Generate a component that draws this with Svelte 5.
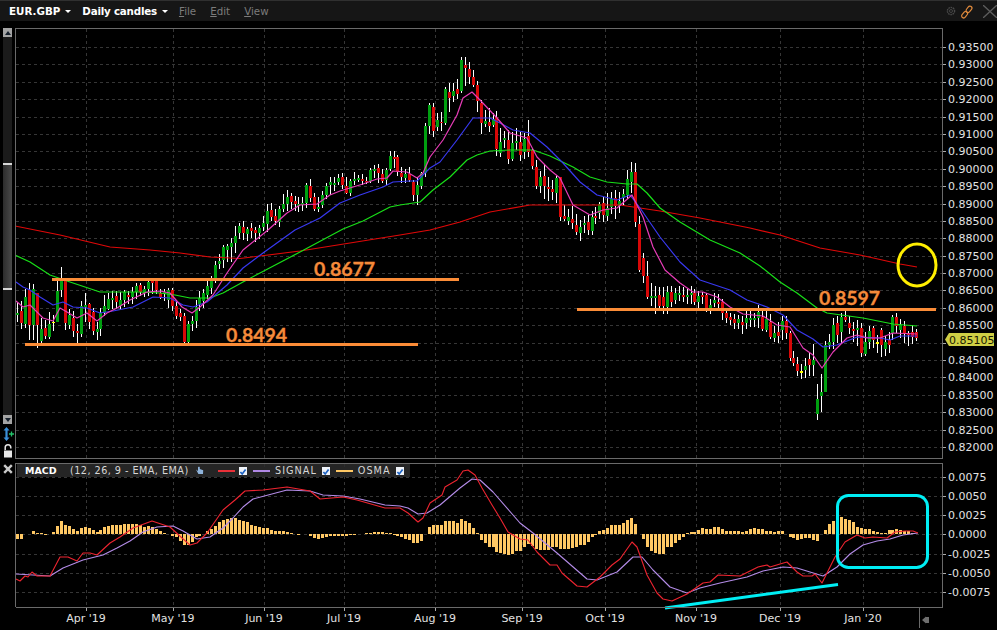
<script>
  // candle rows: colour, body top, body bottom, wick top, wick bottom (pixel y)
  const raw = `g 313 315 300 324,r 311 323 299 330,g 297 324 287 329,r 290 325 281 343,g 289 325 283 343,r 293 325 293 353,g 329 341 316 344,r 328 336 318 340,
g 324 337 309 340,y 322 323 313 333,g 291 322 277 322,g 281 290 264 298,r 281 323 280 332,g 315 325 308 330,r 318 331 310 338,r 331 333 323 349,
g 306 334 300 338,g 305 307 290 325,r 304 322 303 330,r 312 331 307 336,g 329 332 320 342,g 313 329 307 337,g 306 313 293 317,g 299 309 292 310,
g 298 300 289 311,r 296 302 290 310,g 300 306 290 310,g 292 300 289 308,r 295 297 290 305,g 292 297 286 305,g 286 292 282 300,r 285 292 283 297,
g 289 293 285 298,g 282 289 280 297,r 281 283 281 296,r 280 290 279 295,r 293 297 288 300,g 292 294 288 302,g 290 300 288 310,r 290 306 288 312,
r 306 316 300 320,r 313 317 308 322,r 316 342 312 346,g 324 342 320 347,g 321 324 315 332,g 307 321 298 330,g 298 304 290 312,g 293 301 288 310,
g 286 295 276 300,g 281 288 275 295,g 265 278 260 284,g 261 264 252 270,g 247 260 244 270,g 246 250 243 265,g 243 247 237 265,g 236 243 224 255,
g 226 233 222 240,r 227 233 220 242,g 229 234 226 242,r 228 231 222 240,r 230 233 226 244,g 228 233 224 240,g 223 227 215 232,g 211 224 202 234,
r 210 217 202 222,r 216 221 207 226,g 209 222 205 228,g 204 209 192 213,g 197 204 188 212,r 196 202 192 210,r 201 204 195 213,g 204 206 195 213,
g 203 205 196 212,g 185 203 183 209,r 186 198 177 203,r 197 209 192 212,g 207 209 195 213,g 195 205 190 209,g 186 195 182 200,g 182 185 176 197,
g 183 185 176 192,g 178 182 173 186,r 177 185 172 190,r 186 193 175 194,g 181 193 178 197,g 179 181 171 186,g 178 180 174 183,r 179 181 173 186,
r 181 182 176 184,g 170 181 168 184,g 169 171 164 180,r 168 173 163 185,r 174 181 168 184,g 170 180 168 186,g 156 169 150 171,r 157 159 150 170,
r 157 172 154 177,r 173 177 166 184,g 174 178 168 184,r 174 180 166 183,r 182 195 180 202,g 185 195 175 207,g 173 186 172 190,g 126 173 122 178,
g 105 126 102 136,r 107 131 102 138,g 120 127 112 132,r 122 123 110 133,g 89 123 87 125,r 92 98 81 115,g 91 96 81 103,r 89 94 77 100,
g 60 91 56 94,r 65 68 55 90,r 69 77 60 85,r 77 85 68 88,r 85 101 80 115,r 103 123 99 137,g 121 124 108 128,r 122 126 105 133,
g 119 125 112 128,r 117 149 110 158,g 142 153 125 158,g 138 140 130 150,r 140 159 128 165,g 143 159 130 162,g 141 143 125 152,r 142 155 130 162,
g 139 152 132 160,r 136 152 116 158,r 150 166 148 170,r 167 186 158 190,g 177 186 170 194,r 176 186 163 202,r 187 189 175 204,r 189 192 178 202,
g 178 193 176 205,r 177 217 177 222,r 216 219 202 222,g 217 221 207 226,r 219 223 203 230,r 225 232 212 236,g 227 233 218 243,g 223 225 214 235,
r 222 230 213 236,g 217 231 210 236,r 216 218 205 225,g 204 213 201 220,r 203 215 196 224,g 208 216 190 222,g 199 207 190 215,r 198 206 188 222,
g 201 206 190 215,g 194 198 188 207,g 179 195 168 200,g 172 182 160 195,r 172 222 161 228,r 224 270 214 272,r 258 276 252 285,r 276 297 258 300,
g 296 298 280 308,g 296 298 284 317,r 295 306 285 310,r 297 306 285 316,g 292 307 285 316,r 292 302 285 308,g 293 300 287 305,g 293 295 285 302,
r 295 297 285 303,g 295 297 288 306,g 293 295 285 306,r 293 302 288 306,g 296 302 290 310,r 295 297 291 305,r 295 308 292 313,g 305 308 298 315,
g 300 303 291 308,r 302 304 292 312,r 302 313 298 322,r 313 318 308 324,r 317 320 312 326,r 319 323 313 330,g 319 323 314 330,r 322 325 315 336,
g 318 323 310 330,g 318 320 310 328,g 318 320 312 328,g 312 318 303 330,r 317 329 310 332,g 319 330 308 333,r 322 337 312 340,g 333 338 325 343,
r 332 336 320 345,g 321 330 315 342,r 321 333 315 340,r 333 358 330 362,r 358 363 350 367,r 364 371 355 377,y 371 373 362 380,g 366 370 356 380,
r 359 365 350 378,g 360 365 340 378,g 399 414 381 421,g 392 396 370 415,g 345 392 340 392,g 342 345 332 350,g 325 342 317 350,r 323 335 315 345,
g 317 332 312 345,r 317 320 308 322,r 323 328 315 335,r 329 331 320 345,g 328 330 318 350,r 328 353 322 358,g 342 354 330 357,g 331 342 325 350,
r 328 340 325 350,y 342 344 333 355,r 330 345 328 360,g 342 349 335 358,r 340 345 330 355,g 317 333 315 342,r 317 326 312 335,g 325 330 318 340,
r 326 333 320 345,r 333 335 330 348,r 332 337 323 345,r 332 338 328 342`;

  const barX = (i) => Math.round(17.3 + 3.96 * i);

  const candles = raw.split(",").map((row, i) => {
    const [color, top, bottom, high, low] = row.trim().split(" ").map((v, n) => (n ? +v : v));
    // wicks were read off a bit long, pull them in towards the body
    return {
      x: barX(i),
      color,
      top,
      bottom,
      high: Math.round(top - (top - high) * 0.82),
      low: Math.round(bottom + (low - bottom) * 0.82)
    };
  });

  // histogram heights, in thirds of a pixel above the zero line
  const osma = [
    -14, -14, 0, 1, 10, 2, 2, -3, 0, 7, 25, 40, 28, 25, 15, 9, 18, 21, 18, 12, 7, 13, 20, 25, 28, 28, 28, 31, 30, 29,
    29, 26, 22, 25, 22, 15, 8, 3, 1, -5, -10, -20, -32, -32, -25, -10, -6, 0, 8, 15, 25, 35, 42, 45, 48, 48, 42, 40, 35, 28,
    25, 20, 19, 17, 12, 9, 9, 9, 6, 4, 0, -4, 0, 1, -6, -12, -16, -12, -8, -6, -5, -7, -5, -5, -4, -3, -1, 1, 3, 4,
    5, 7, 6, 4, 3, -2, -6, -10, -14, -18, -26, -26, -20, -1, 22, 26, 28, 28, 40, 40, 40, 33, 44, 40, 32, 18, 4, -18, -28, -38,
    -40, -55, -58, -60, -62, -60, -52, -52, -38, -30, -35, -45, -48, -48, -48, -40, -40, -45, -44, -44, -42, -38, -34, -33, -24, -10, -2, 8, 12, 18,
    27, 26, 28, 32, 42, 48, 30, 0, -15, -38, -50, -58, -60, -60, -40, -38, -28, -18, -8, 2, 6, 5, 12, 17, 14, 14, 20, 20, 16, 10,
    8, 8, 8, 6, 10, 14, 17, 14, 14, 8, 8, 6, 10, 8, 0, -8, -12, -18, -16, -13, -12, -18, -22, 0, 12, 30, 40, 46, 52, 45,
    42, 36, 22, 18, 16, 15, 8, 5, 2, 3, 12, 13, 15, 12, 9, 8, 2, 1
  ];
  const zeroY = 534;

  const ema200 = "15,226 60,235 110,247 150,250 180,253 210,257 240,258.5 260,256 300,251 350,243 400,235 430,230 460,222 490,212 530,205 560,205 620,205 660,211 700,218 750,228 780,235 820,248 860,255 900,264 917,267";
  const ema50 = "15,255 30,262 50,275 70,282 100,292 140,292 160,293 175,295 190,298 210,298 223,293 243,282 260,273 300,252 343,229 363,221 390,207 400,205 420,202 433,190 450,177 467,160 477,155 490,151 510,150 533,150 550,156 573,167 590,177 607,182 627,184 637,184 647,193 660,208 680,222 710,240 740,253 760,266 780,282 797,293 817,308 827,313 863,318 893,324 917,326";
  const ema20 = "16,282 23,287 30,290 40,297 53,305 63,302 73,307 87,308 100,313 113,311 133,307 153,297 170,298 183,305 193,307 207,302 227,285 243,268 263,253 295,230 320,218 340,203 360,195 383,187 393,182 410,181 417,181 430,168 440,162 457,140 473,118 490,118 500,123 513,130 530,133 547,147 563,163 580,182 597,195 617,200 630,195 640,208 660,237 680,262 700,280 730,290 747,300 767,307 783,315 797,330 813,339 823,347 837,345 857,337 880,338 890,340 900,336 917,336";
  const ema9 = "16,301 23,307 30,305 37,312 43,318 53,321 60,308 67,312 77,318 87,313 97,321 107,313 117,308 130,300 147,292 160,291 170,293 182,307 192,313 200,307 213,295 227,273 243,250 268,230 287,213 300,205 317,204 330,195 340,191 363,184 377,179 387,178 393,171 407,172 417,178 423,173 430,157 443,140 457,115 463,98 472,92 480,100 497,118 510,133 527,138 537,157 550,170 560,178 573,205 590,215 603,210 617,208 632,195 643,217 653,247 665,270 680,283 693,292 703,292 717,297 730,307 743,314 763,316 777,325 790,327 803,348 813,355 822,368 833,352 847,338 857,335 867,338 880,338 893,333 917,334";

  const macdLine = "16,579 20,581 25,576 28,577 32,572 37,576 50,576 60,557 68,557 77,561 83,553 90,553 97,555 110,543 120,537 133,528 152,521 170,527 182,538 190,545 197,543 207,533 223,510 235,500 245,491 263,490 287,487 310,491 320,499 343,497 357,500 385,508 400,508 408,513 418,522 423,518 430,503 442,495 445,487 457,480 463,471 468,470 475,475 482,488 492,505 500,518 508,532 520,539 528,540 537,552 550,565 557,565 562,573 577,586 587,587 600,577 612,565 620,559 632,542 637,547 647,575 657,593 663,599 672,601 687,594 703,583 710,582 718,575 740,576 758,567 767,565 770,567 780,564 787,562 797,572 803,576 812,576 815,574 822,583 835,557 845,542 857,535 865,538 873,537 887,538 895,532 905,531 913,531 918,533";
  const signalLine = "16,574 33,575 50,576 63,568 73,564 83,560 103,555 117,548 130,541 143,532 157,527 173,526 183,531 197,539 210,537 223,528 233,518 243,507 253,499 287,490 310,491 323,495 343,496 360,499 385,505 400,506 408,508 418,514 427,513 440,505 460,488 472,479 480,480 493,492 520,523 533,533 557,553 587,579 597,580 617,572 633,557 642,557 653,570 670,587 687,593 700,588 720,583 747,577 763,571 783,567 797,568 810,572 823,576 837,567 850,554 863,545 877,541 890,539 903,535 918,533";

  const months = [
    { x: 86, label: "Apr '19" },
    { x: 173, label: "May '19" },
    { x: 264, label: "Jun '19" },
    { x: 344, label: "Jul '19" },
    { x: 435, label: "Aug '19" },
    { x: 522, label: "Sep '19" },
    { x: 605, label: "Oct '19" },
    { x: 696, label: "Nov '19" },
    { x: 780, label: "Dec '19" },
    { x: 863, label: "Jan '20" }
  ];

  const prices = [];
  for (let n = 0; n < 24; n++) {
    const value = 0.935 - n * 0.005;
    prices.push({ y: Math.round(47 + n * 17.39), label: value.toFixed(5) });
  }

  const macdTicks = [
    { y: 477, label: "0.0075" },
    { y: 496, label: "0.0050" },
    { y: 515, label: "0.0025" },
    { y: 534, label: "0.0000" },
    { y: 554, label: "-0.0025" },
    { y: 573, label: "-0.0050" },
    { y: 592, label: "-0.0075" }
  ];
</script>

<div class="window">
  <header class="bar">
    <span class="title">EUR.GBP</span><i class="caret"></i>
    <span class="title daily">Daily candles</span><i class="caret"></i>
    <nav class="menu">
      <span><u>F</u>ile</span>
      <span><u>E</u>dit</span>
      <span><u>V</u>iew</span>
    </nav>
    <div class="tools">
      <svg width="10" height="10" viewBox="0 0 10 10">
        <circle cx="5" cy="5" r="3.6" fill="none" stroke="#4a4a4a" stroke-width="1.4" stroke-dasharray="1.6 .7" />
        <circle cx="5" cy="5" r="1.5" fill="none" stroke="#444" />
      </svg>
      <svg class="link" width="14" height="14" viewBox="0 0 14 14" fill="none" stroke="#e08a3c" stroke-width="1.2">
        <rect x="7" y="0.8" width="4" height="7" rx="2" transform="rotate(38 9 4.3)" />
        <rect x="2.6" y="6.2" width="4" height="7" rx="2" transform="rotate(38 4.6 9.7)" />
      </svg>
      <svg class="close" width="14" height="13" viewBox="0 0 14 13" stroke="#5c5c5c" stroke-width="1.3">
        <path d="M0 0 14 13M14 0 0 13" />
      </svg>
    </div>
  </header>

  <div class="body">
    <aside class="rail">
      <button class="step" aria-label="up"><i class="up"></i></button>
      <div class="track"></div>
      <div class="thumb"></div>
      <div class="track lower"></div>
      <button class="step" aria-label="down"><i class="down"></i></button>
      <svg class="resize" width="13" height="15" viewBox="0 0 13 15">
        <path d="M4.5 0 7.5 3.5H5.6V10.5H7.5L4.5 14 1.5 10.5H3.4V3.5H1.5Z" fill="#3a8fd8" />
        <path d="M9.5 4.5V9.5M7 7H12" stroke="#22c46a" stroke-width="1.3" />
      </svg>
      <svg class="lock" width="10" height="14" viewBox="0 0 10 14">
        <path d="M2.2 6V3.6A2.8 2.8 0 0 1 7.8 3.6V4.6" fill="none" stroke="#e6e6e6" stroke-width="1.5" />
        <rect x="1" y="6.5" width="8" height="7" fill="#e6e6e6" />
      </svg>
      <svg class="remove" width="10" height="10" viewBox="0 0 10 10">
        <path d="M1.2 1.2 8.8 8.8M8.8 1.2 1.2 8.8" stroke="#c8c8c8" stroke-width="2.4" />
      </svg>
    </aside>

    <div class="panes">
      <svg class="pane" width="982" height="431" viewBox="15 28 982 431">
        <g class="grid">
          {#each months as m}
            <line x1={m.x} x2={m.x} y1="29" y2="458" />
          {/each}
          {#each prices as p}
            <line x1="16" x2="942" y1={p.y} y2={p.y} />
          {/each}
        </g>

        <g class="candles">
          {#each candles as c}
            <rect class="wick" x={c.x} y={c.high} width="1" height={c.low - c.high} />
            <rect class={c.color} x={c.x - 1} y={c.top} width="3" height={c.bottom - c.top} />
          {/each}
        </g>

        <g class="lines">
          <polyline points={ema200} stroke="#e00808" />
          <polyline points={ema50} stroke="#18e018" />
          <polyline points={ema20} stroke="#3838f0" />
          <polyline points={ema9} stroke="#e83cb8" />
        </g>

        <g class="levels">
          <rect x="52" y="278" width="407" height="3" />
          <rect x="25" y="343" width="393" height="3" />
          <rect x="577" y="308" width="359" height="3" />
        </g>
        <text class="level" x="314" y="276">0.8677</text>
        <text class="level" x="226" y="342">0.8494</text>
        <text class="level" x="819" y="305">0.8597</text>
        <ellipse cx="917" cy="265" rx="19" ry="21" fill="none" stroke="#ffee00" stroke-width="3" />

        <path class="frame" d="M15.5 459V28.5H942.5V459M15.5 458.5H942.5" />
        {#each prices as p}
          <line class="tick" x1="943" x2="946" y1={p.y} y2={p.y} />
          {#if p.label !== "0.85000"}
            <text class="axis" x="948" y={p.y + 4}>{p.label}</text>
          {/if}
        {/each}
        <path d="M945 339.5 949 333H994V346H949Z" fill="#cfcf45" />
        <text class="axis tag" x="949" y="344">0.85105</text>
      </svg>

      <div class="macd">
        <div class="legend">
          <b>MACD</b>
          <span class="params">(12, 26, 9 - EMA, EMA)</span>
          <svg class="hand" width="9" height="9" viewBox="0 0 9 9">
            <path d="M1 3.4 3 5V1.2L4 .6 4.8 1.2V3L8.2 4.2 8 8H3.4Z" fill="#8fb4dc" />
          </svg>
          <i class="swatch macd-line"></i>
          <i class="box"><svg width="8" height="8" viewBox="0 0 8 8"><path d="M1.4 4 3.2 6 6.6 1.6" fill="none" stroke="#1d63c4" stroke-width="1.7" /></svg></i>
          <i class="swatch signal-line"></i>
          <span>SIGNAL</span>
          <i class="box"><svg width="8" height="8" viewBox="0 0 8 8"><path d="M1.4 4 3.2 6 6.6 1.6" fill="none" stroke="#1d63c4" stroke-width="1.7" /></svg></i>
          <i class="swatch osma-line"></i>
          <span>OSMA</span>
          <i class="box"><svg width="8" height="8" viewBox="0 0 8 8"><path d="M1.4 4 3.2 6 6.6 1.6" fill="none" stroke="#1d63c4" stroke-width="1.7" /></svg></i>
        </div>

        <svg class="pane" width="982" height="167" viewBox="15 463 982 167">
          <g class="grid">
            {#each months as m}
              <line x1={m.x} x2={m.x} y1="464" y2="607" />
            {/each}
            {#each macdTicks as t}
              <line x1="16" x2="942" y1={t.y} y2={t.y} />
            {/each}
          </g>

          <g class="bars">
            {#each osma as h, i}
              {#if h !== 0}
                <rect x={barX(i) - 1} y={h > 0 ? zeroY - h / 3 : zeroY} width="3" height={Math.abs(h) / 3} />
              {/if}
            {/each}
          </g>

          <g class="lines thin">
            <polyline points={signalLine} stroke="#b48ce8" />
            <polyline points={macdLine} stroke="#ee2430" />
          </g>

          <rect x="837.5" y="495.5" width="90" height="72" rx="11" fill="none" stroke="#00eef4" stroke-width="3" />
          <line x1="665" y1="608" x2="838" y2="584.5" stroke="#00eef4" stroke-width="3" />

          <path class="frame" d="M15.5 607V463.5H942.5V607.5H15.5" />
          {#each macdTicks as t}
            <line class="tick" x1="943" x2="946" y1={t.y} y2={t.y} />
            <text class="axis" x="948" y={t.y + 4}>{t.label}</text>
          {/each}
          {#each months as m}
            <line class="tick" x1={m.x} x2={m.x} y1="608" y2="611" />
            <text class="axis month" x={m.x} y="622">{m.label}</text>
          {/each}

          <line class="frame" x1="919.5" x2="919.5" y1="608" y2="628" />
          <path d="M922 620 926 616.5V623.5Z M926 617H929V623H926Z" fill="#6e6e6e" />
        </svg>
      </div>
    </div>
  </div>
</div>

<style>
  :global(body) {
    background: #000;
  }

  .window {
    width: 997px;
    height: 630px;
    background: #000;
    overflow: hidden;
    font-family: "DejaVu Sans", sans-serif;
  }

  .bar {
    display: flex;
    align-items: center;
    height: 20px;
    margin-bottom: 7px;
    padding-left: 9px;
    background: #161616;
    border-top: 1px solid #303030;
    font-size: 10.3px;
    color: #fff;
  }

  .title {
    font-weight: 700;
  }

  .daily {
    margin-left: 11px;
    letter-spacing: -0.2px;
  }

  .caret {
    width: 0;
    height: 0;
    margin: 1px 0 0 5px;
    border: 3px solid transparent;
    border-top-color: #fff;
    border-bottom: 0;
  }

  .menu {
    display: flex;
    gap: 14px;
    margin-left: 11px;
    color: #7c7c7c;
  }

  .tools {
    display: flex;
    align-items: center;
    margin-left: auto;
  }

  .link {
    margin: 1px 0 0 4px;
  }

  .close {
    margin-left: 9px;
  }

  .body {
    display: flex;
  }

  .rail {
    display: flex;
    flex-direction: column;
    align-items: flex-start;
    width: 15px;
    padding-left: 3px;
    box-sizing: border-box;
  }

  .step {
    display: flex;
    align-items: center;
    justify-content: center;
    width: 9px;
    height: 9px;
    padding: 0;
    border: 0;
    background: #a4a4a4;
  }

  .up,
  .down {
    width: 0;
    height: 0;
    border: 3px solid transparent;
  }

  .up {
    border-top: 0;
    border-bottom: 4px solid #16202c;
  }

  .down {
    border-bottom: 0;
    border-top: 4px solid #16202c;
  }

  .track {
    width: 9px;
    height: 126px;
    background: #1b1b1b;
  }

  .lower {
    height: 125px;
  }

  .thumb {
    width: 9px;
    height: 123px;
    background: linear-gradient(to right, #2c2c2c, #4a4a4a);
    border-top: 2px solid #d8d8d8;
    border-bottom: 2px solid #d8d8d8;
  }

  .resize {
    margin: 3px 0 0 -1px;
  }

  .lock {
    margin: 2px 0 0 0;
  }

  .remove {
    margin: 6px 0 0 0;
  }

  .panes {
    display: flex;
    flex-direction: column;
    gap: 4px;
  }

  .pane {
    display: block;
  }

  .macd {
    position: relative;
  }

  .legend {
    position: absolute;
    top: 1px;
    left: 2px;
    display: flex;
    align-items: center;
    box-sizing: border-box;
    width: 393px;
    height: 13px;
    padding-left: 8px;
    background: rgba(44, 44, 44, 0.85);
    font-size: 9.7px;
    letter-spacing: 1px;
    color: #d8d8d8;
    white-space: nowrap;
  }

  .legend b {
    width: 45px;
    font-size: 9.5px;
    color: #fff;
    letter-spacing: 0;
  }

  .params {
    width: 125px;
    letter-spacing: 0.45px;
  }

  .hand {
    margin-right: 14px;
  }

  .swatch {
    width: 17px;
    height: 2px;
    margin-right: 4px;
  }

  .macd-line {
    background: #ea3038;
  }

  .signal-line {
    background: #b088e4;
    margin-right: 5px;
  }

  .osma-line {
    background: #ffc864;
    margin-right: 5px;
  }

  .box {
    display: block;
    width: 8px;
    height: 8px;
    margin: 0 6px 0 5px;
    background: #eef2f8;
  }

  .swatch + .box {
    margin-left: 0;
  }

  .grid line {
    stroke: #363636;
    stroke-dasharray: 3 3;
    shape-rendering: crispEdges;
  }

  .candles rect,
  .levels rect,
  .bars rect {
    shape-rendering: crispEdges;
  }

  .wick {
    fill: #fff;
  }

  .g {
    fill: #00a010;
  }

  .r {
    fill: #d80808;
  }

  .y {
    fill: #ffff00;
  }

  .lines polyline {
    fill: none;
    stroke-width: 1.2;
    stroke-linejoin: round;
  }

  .thin polyline {
    stroke-width: 1.1;
  }

  .levels rect {
    fill: #fb8c37;
  }

  .level {
    font-family: Lato, sans-serif;
    font-size: 19.5px;
    font-weight: 700;
    fill: #f58a3a;
    stroke: #f58a3a;
    stroke-width: 0.3;
  }

  .bars rect {
    fill: #ffc864;
  }

  .frame {
    fill: none;
    stroke: #6a6a6a;
    shape-rendering: crispEdges;
  }

  .tick {
    stroke: #aaa;
    shape-rendering: crispEdges;
  }

  .axis {
    font-size: 11px;
    fill: #e2e2e2;
  }

  .month {
    text-anchor: middle;
  }

  .tag {
    fill: #1a1a00;
  }
</style>
